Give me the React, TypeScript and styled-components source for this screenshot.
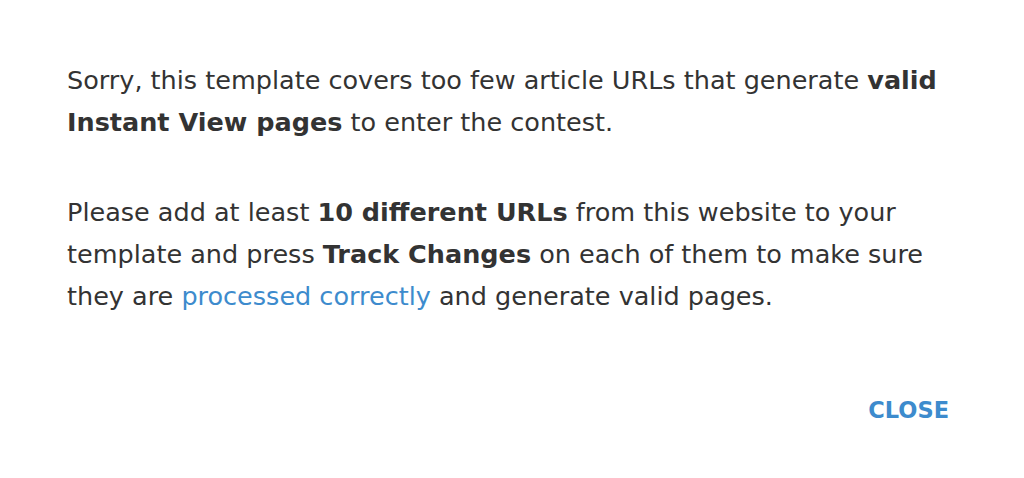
import React from 'react';
import styled, { createGlobalStyle } from 'styled-components';

const GlobalStyle = createGlobalStyle`
  html, body {
    margin: 0;
    padding: 0;
    background: #fff;
  }
`;

const Popup = styled.div`
  width: 1024px;
  height: 478px;
  box-sizing: border-box;
  padding: 59px 75px 0 67px;
  font-family: "DejaVu Sans", "Open Sans", sans-serif;
  font-size: 25.5px;
  line-height: 42px;
  color: #333;
  display: flex;
  flex-direction: column;
`;

const Text = styled.p`
  margin: 0 0 48px;
  white-space: nowrap;
`;

const Strong = styled.b`
  font-weight: bold;
`;

const Link = styled.a`
  color: #3d8bcd;
  text-decoration: none;
`;

const Buttons = styled.div`
  display: flex;
  justify-content: flex-end;
  margin-top: 32px;
`;

const CloseButton = styled.button`
  border: none;
  background: none;
  padding: 0;
  font-family: inherit;
  font-size: 22.5px;
  font-weight: bold;
  color: #3d8bcd;
  cursor: pointer;
`;

const App = () => {
  return (
    <>
      <GlobalStyle />
      <Popup>
        <Text>
          Sorry, this template covers too few article URLs that generate <Strong>valid</Strong>
          <br />
          <Strong>Instant View pages</Strong> to enter the contest.
        </Text>
        <Text>
          Please add at least <Strong>10 different URLs</Strong> from this website to your
          <br />
          template and press <Strong>Track Changes</Strong> on each of them to make sure
          <br />
          they are <Link href="#">processed correctly</Link> and generate valid pages.
        </Text>
        <Buttons>
          <CloseButton>CLOSE</CloseButton>
        </Buttons>
      </Popup>
    </>
  );
};

export default App;
